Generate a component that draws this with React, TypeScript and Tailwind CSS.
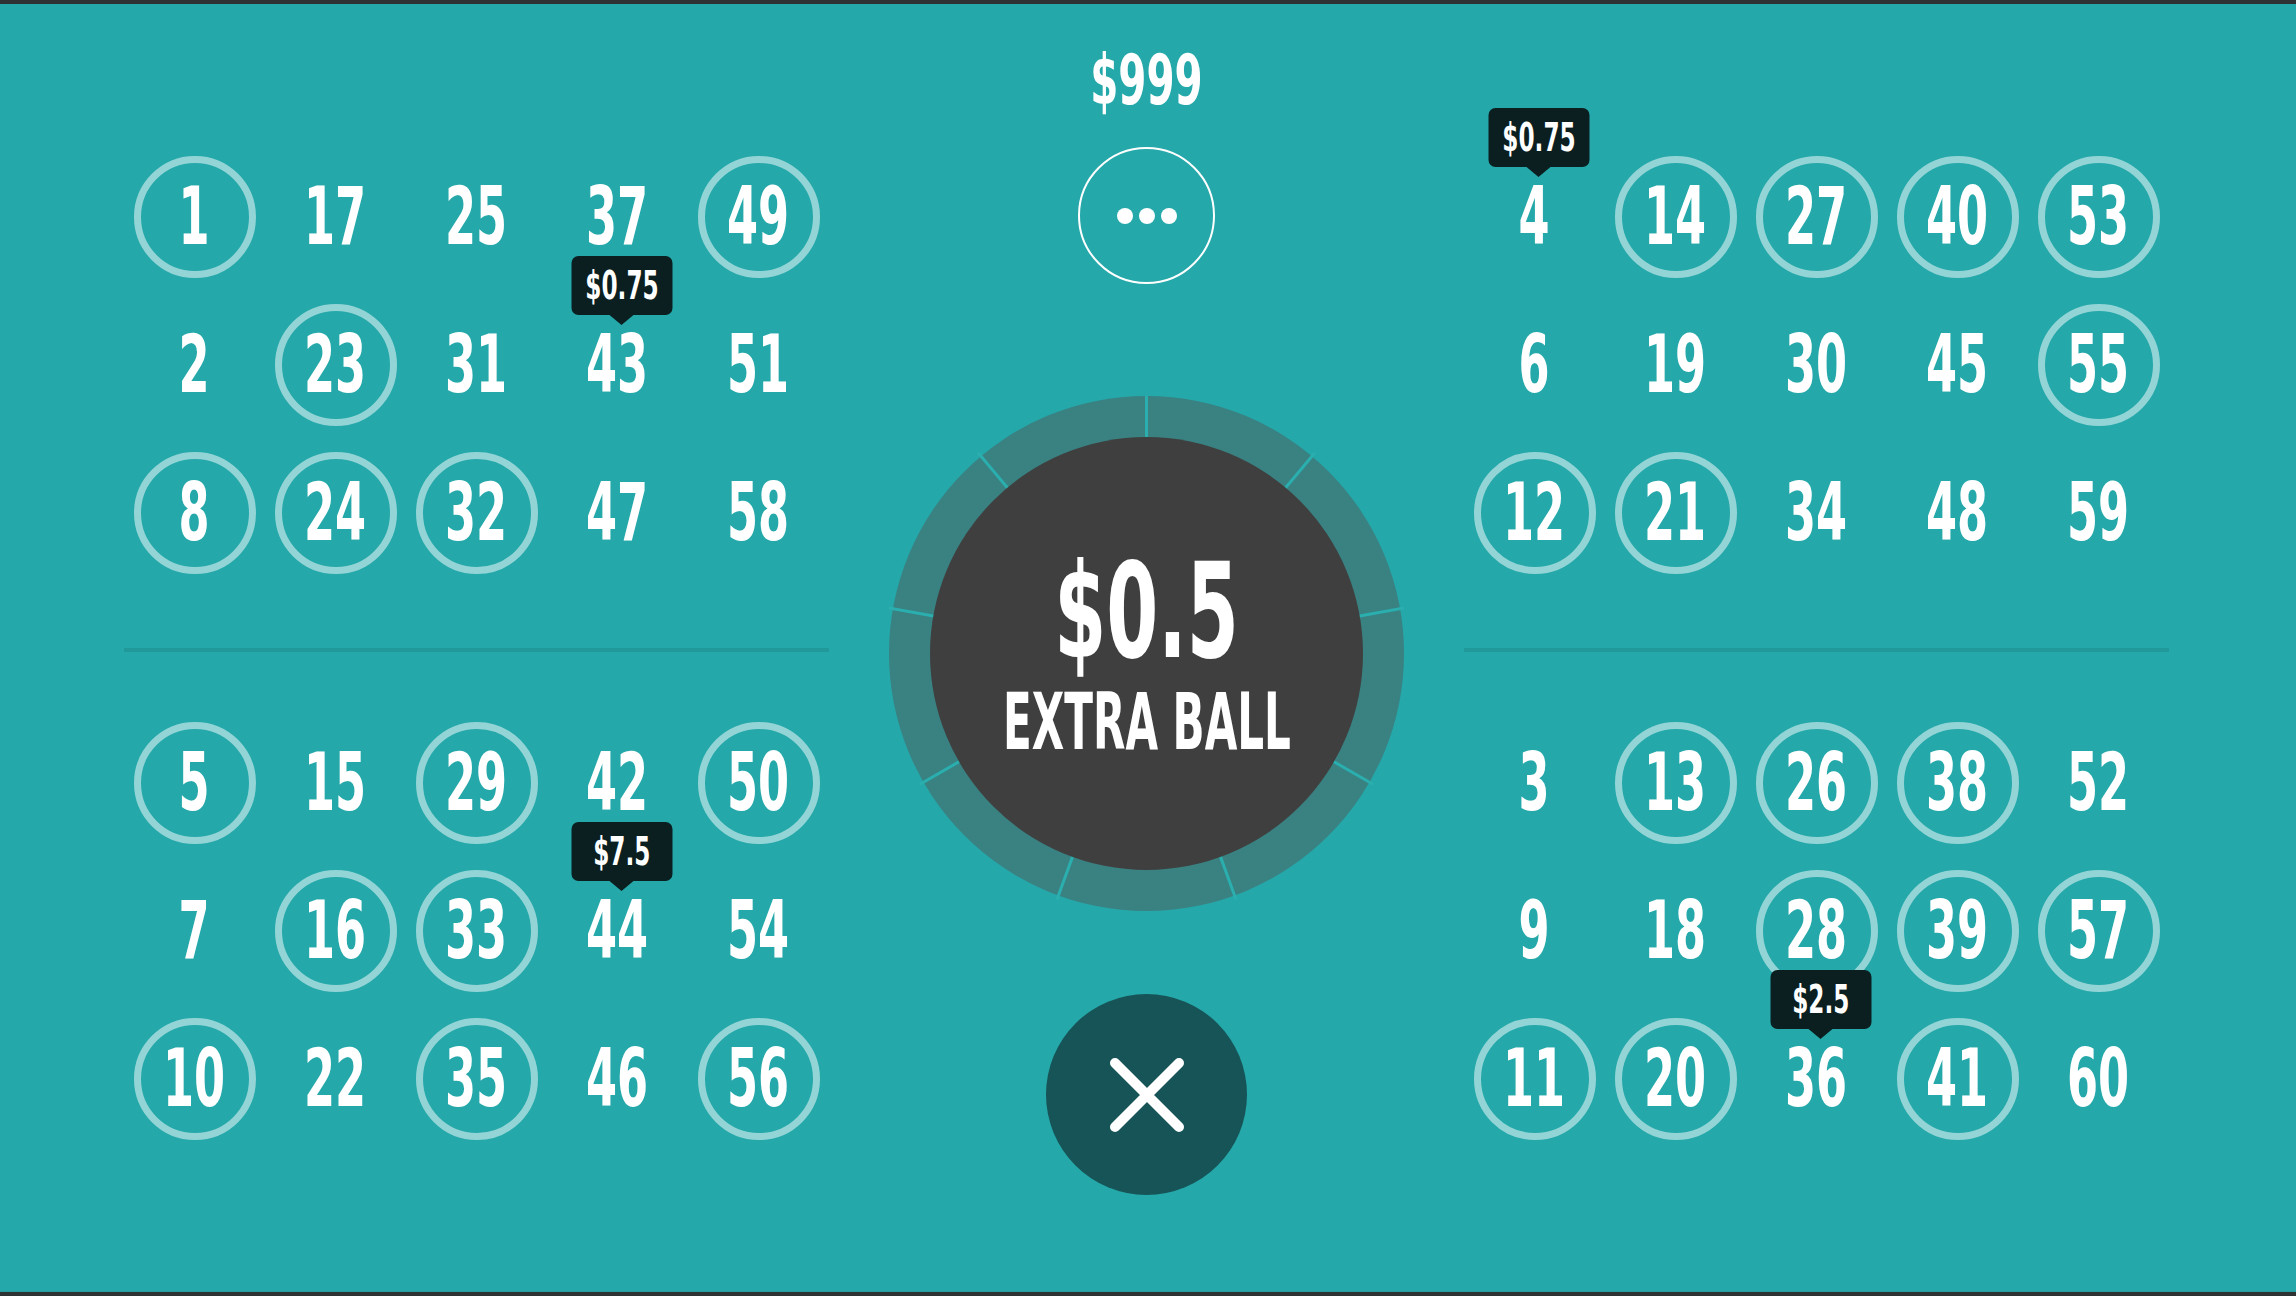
import React from "react";

const font = "font-['DejaVu_Sans_Condensed','Liberation_Sans',sans-serif] font-bold whitespace-nowrap";

const circled = new Set([
  1, 49, 23, 8, 24, 32, 5, 29, 50, 16, 33, 10, 35, 56, 14, 27, 40, 53, 55, 12, 21, 13, 26, 38, 28, 39, 57, 11, 20, 41,
]);

const tips: Record<number, string> = { 43: "$0.75", 44: "$7.5", 4: "$0.75", 36: "$2.5" };

const leftTop = [1, 17, 25, 37, 49, 2, 23, 31, 43, 51, 8, 24, 32, 47, 58];
const leftBottom = [5, 15, 29, 42, 50, 7, 16, 33, 44, 54, 10, 22, 35, 46, 56];
const rightTop = [4, 14, 27, 40, 53, 6, 19, 30, 45, 55, 12, 21, 34, 48, 59];
const rightBottom = [3, 13, 26, 38, 52, 9, 18, 28, 39, 57, 11, 20, 36, 41, 60];

function Tip({ label }: { label: string }) {
  return (
    <div className="absolute bottom-[114px] left-[calc(50%+4px)] -translate-x-1/2 flex flex-col items-center z-10">
      <div className="w-[101px] h-[59px] rounded-[7px] bg-[#0b1f21] flex items-center justify-center">
        <span className={`${font} inline-block text-[39px] leading-none text-white scale-x-[0.66]`}>{label}</span>
      </div>
      <div className="w-0 h-0 border-x-[12px] border-x-transparent border-t-[10px] border-t-[#0b1f21]" />
    </div>
  );
}

function Cell({ n }: { n: number }) {
  const ring = circled.has(n);
  return (
    <div className="relative h-[148px] flex items-center justify-center">
      <div
        className={`w-[122px] h-[122px] rounded-full flex items-center justify-center ${
          ring ? "border-[7px] border-[#93d5d6]" : ""
        }`}
      >
        <span className={`${font} inline-block text-[80px] leading-none text-white scale-x-[0.62]`}>{n}</span>
      </div>
      {tips[n] && <Tip label={tips[n]} />}
    </div>
  );
}

function Board({ top, bottom }: { top: number[]; bottom: number[] }) {
  return (
    <div className="w-[705px] pt-[139px] flex flex-col">
      <div className="grid grid-cols-5">
        {top.map((n) => (
          <Cell key={n} n={n} />
        ))}
      </div>
      <div className="mt-[61px] h-[4px] bg-[#21989a]" />
      <div className="mt-[57px] grid grid-cols-5">
        {bottom.map((n) => (
          <Cell key={n} n={n} />
        ))}
      </div>
    </div>
  );
}

function Dial() {
  // 9 segments, 40deg each, split by thin teal lines
  const angles = Array.from({ length: 9 }, (_, i) => i * 40);
  return (
    <div className="relative w-[515px] h-[515px] rounded-full bg-[#3a8182] flex items-center justify-center">
      <svg className="absolute inset-0" width="515" height="515" viewBox="0 0 515 515">
        {angles.map((a) => {
          const r = (a * Math.PI) / 180;
          const c = 257.5;
          return (
            <line
              key={a}
              x1={c + Math.sin(r) * 205}
              y1={c - Math.cos(r) * 205}
              x2={c + Math.sin(r) * 262}
              y2={c - Math.cos(r) * 262}
              stroke="#2aaeae"
              strokeWidth="3"
            />
          );
        })}
      </svg>
      <div className="relative w-[433px] h-[433px] rounded-full bg-[#3f3f3f] flex flex-col items-center pt-[108px]">
        <span className={`${font} inline-block text-[132px] leading-none text-white scale-x-[0.63]`}>$0.5</span>
        <span className={`${font} inline-block text-[78px] leading-none text-white scale-x-[0.6] mt-[6px]`}>
          EXTRA BALL
        </span>
      </div>
    </div>
  );
}

export default function App() {
  return (
    <div className="w-full h-[1296px] flex flex-col bg-[#25a8aa]">
      <div className="h-[4px] bg-[#2f3233]" />
      <div className="flex-1 flex pl-[124px] pr-[127px]">
        <Board top={leftTop} bottom={leftBottom} />
        <div className="w-[635px] flex flex-col items-center">
          <div className="mt-[41px] h-[70px] flex items-center">
            <span className={`${font} inline-block text-[69px] leading-none text-white scale-x-[0.65]`}>$999</span>
          </div>
          <button className="mt-[32px] w-[137px] h-[137px] rounded-full border-2 border-white flex items-center justify-center gap-[6px]">
            <span className="w-[16px] h-[16px] rounded-full bg-white" />
            <span className="w-[16px] h-[16px] rounded-full bg-white" />
            <span className="w-[16px] h-[16px] rounded-full bg-white" />
          </button>
          <div className="mt-[112px]">
            <Dial />
          </div>
          <button className="mt-[83px] w-[201px] h-[201px] rounded-full bg-[#165457] flex items-center justify-center">
            <svg width="76" height="76" viewBox="0 0 76 76">
              <path d="M6 6 L70 70 M70 6 L6 70" stroke="white" strokeWidth="10" strokeLinecap="round" />
            </svg>
          </button>
        </div>
        <Board top={rightTop} bottom={rightBottom} />
      </div>
      <div className="h-px bg-[#2b9c9d]" />
      <div className="h-[4px] bg-[#2f3233]" />
    </div>
  );
}
